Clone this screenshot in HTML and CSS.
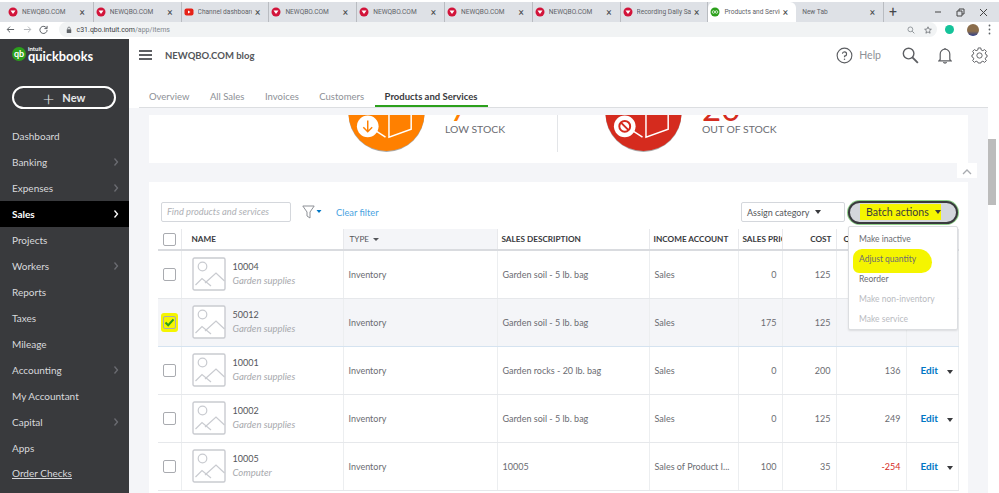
FILE: index.html
```html
<!DOCTYPE html>
<html lang="en">
<head>
  <meta charset="UTF-8" />
  <title>Products and Services</title>
  <link rel="stylesheet" href="styles.css">
</head>
<body>
  <svg class="defs" width="0" height="0">
    <symbol id="thumb" viewBox="0 0 34 34">
      <rect x="1" y="1" width="32" height="32" rx="1.5" fill="#fff" stroke="#c9cbd0" stroke-width="1.4"/>
      <circle cx="10.500" cy="9.500" r="4.300" fill="none" stroke="#c9cbd0" stroke-width="1.200"/>
      <path d="M3.500 28 L10 21.500 L19 29 M13 26 L24 16 L32.500 24" fill="none" stroke="#c9cbd0" stroke-width="1.200"/>
    </symbol>
    <symbol id="fav" viewBox="0 0 10 10">
      <circle cx="5" cy="5" r="4.500" fill="#d2143a"/>
      <path d="M2.500 3.500 H7.500 L5 7 Z" fill="#fff"/>
    </symbol>
    <symbol id="chev" viewBox="0 0 6 10">
      <path d="M1.500 1.500 L4.500 5 L1.500 8.500" fill="none" stroke="currentColor" stroke-width="1.300"/>
    </symbol>
    <symbol id="box" viewBox="0 0 78 78">
      <path d="M41.500 12 V63 L64 55 V12 M54 12 V33 L49 35 M59 12 V20" fill="none" stroke="#fff" stroke-width="1.500"/>
      <path d="M29 57 L38 63" stroke="#fff" stroke-width="1.500"/>
      <circle cx="20" cy="52" r="11" fill="#fff"/>
    </symbol>
  </svg>

  <div class="tabstrip">
    <div class="tab"><svg class="fav"><use href="#fav"/></svg><span class="tab-title">NEWQBO.COM</span><span class="tab-x">×</span></div>
    <div class="tab"><svg class="fav"><use href="#fav"/></svg><span class="tab-title">NEWQBO.COM</span><span class="tab-x">×</span></div>
    <div class="tab">
      <svg class="fav" viewBox="0 0 10 10"><rect x="0.500" y="1.500" width="9" height="7" rx="2" fill="#e62117"/><path d="M4 3.500 L6.500 5 L4 6.500 Z" fill="#fff"/></svg>
      <span class="tab-title">Channel dashboard</span><span class="tab-x">×</span>
    </div>
    <div class="tab"><svg class="fav"><use href="#fav"/></svg><span class="tab-title">NEWQBO.COM</span><span class="tab-x">×</span></div>
    <div class="tab"><svg class="fav"><use href="#fav"/></svg><span class="tab-title">NEWQBO.COM</span><span class="tab-x">×</span></div>
    <div class="tab"><svg class="fav"><use href="#fav"/></svg><span class="tab-title">NEWQBO.COM</span><span class="tab-x">×</span></div>
    <div class="tab"><svg class="fav"><use href="#fav"/></svg><span class="tab-title">NEWQBO.COM</span><span class="tab-x">×</span></div>
    <div class="tab"><svg class="fav"><use href="#fav"/></svg><span class="tab-title">Recording Daily Sal</span><span class="tab-x">×</span></div>
    <div class="tab tab-active">
      <svg class="fav" viewBox="0 0 10 10"><circle cx="5" cy="5" r="4.500" fill="#2ca01c"/><circle cx="3.500" cy="5" r="1.300" fill="none" stroke="#fff" stroke-width="0.700"/><circle cx="6.500" cy="5" r="1.300" fill="none" stroke="#fff" stroke-width="0.700"/></svg>
      <span class="tab-title">Products and Servic</span><span class="tab-x">×</span>
    </div>
    <div class="tab tab-new"><span class="tab-title">New Tab</span><span class="tab-x">×</span></div>
    <span class="tab-plus">+</span>
    <div class="win-controls">
      <svg width="8" height="8" viewBox="0 0 8 8"><path d="M1 4 H7" stroke="#444" stroke-width="1"/></svg>
      <svg width="9" height="9" viewBox="0 0 9 9"><path d="M1 3 H6 V8 H1 Z M3 3 V1 H8 V6 H6" fill="none" stroke="#444" stroke-width="1"/></svg>
      <svg width="9" height="9" viewBox="0 0 9 9"><path d="M1 1 L8 8 M8 1 L1 8" stroke="#444" stroke-width="1"/></svg>
    </div>
  </div>

  <div class="toolbar">
    <svg class="tool-icon" viewBox="0 0 10 10"><path d="M9 5 H1.500 M4.500 1.800 L1.300 5 L4.500 8.200" fill="none" stroke="#5f6368" stroke-width="1.100"/></svg>
    <svg class="tool-icon" viewBox="0 0 10 10"><path d="M1 5 H8.500 M5.500 1.800 L8.700 5 L5.500 8.200" fill="none" stroke="#b4b7bb" stroke-width="1.100"/></svg>
    <svg class="tool-icon" viewBox="0 0 10 10"><path d="M8.500 3.500 A4 4 0 1 0 9 5.500 M9 1 V4 H6" fill="none" stroke="#5f6368" stroke-width="1.100"/></svg>
    <div class="urlbar">
      <svg class="lock" viewBox="0 0 8 10"><rect x="1" y="4" width="6" height="5" rx="0.800" fill="#5f6368"/><path d="M2.300 4 V2.800 A1.700 1.700 0 0 1 5.700 2.800 V4" fill="none" stroke="#5f6368"/></svg>
      <span class="url">c31.qbo.intuit.com<span class="url-path">/app/items</span></span>
      <svg class="url-icon" viewBox="0 0 10 10"><circle cx="4.200" cy="4.200" r="3" fill="none" stroke="#80868b"/><path d="M6.500 6.500 L9.200 9.200" stroke="#80868b" stroke-width="1.100"/></svg>
      <svg class="url-icon" viewBox="0 0 10 10"><path d="M5 1 L6.200 3.800 L9.200 4.100 L6.900 6 L7.600 9 L5 7.400 L2.400 9 L3.100 6 L0.800 4.100 L3.800 3.800 Z" fill="none" stroke="#5f6368" stroke-width="0.900"/></svg>
    </div>
    <span class="grammarly"></span>
    <span class="avatar"></span>
    <svg class="dots" viewBox="0 0 3 11"><circle cx="1.500" cy="1.500" r="0.900" fill="#5f6368"/><circle cx="1.500" cy="5.500" r="0.900" fill="#5f6368"/><circle cx="1.500" cy="9.500" r="0.900" fill="#5f6368"/></svg>
  </div>

  <div class="app">
    <aside class="sidebar">
      <div class="logo">
        <span class="logo-mark">qb</span>
        <span class="logo-text"><small>intuit</small>quickbooks</span>
      </div>
      <div class="new-btn"><span class="new-plus">+</span>New</div>
      <ul class="side-nav">
        <li>Dashboard</li>
        <li>Banking<svg class="chev"><use href="#chev"/></svg></li>
        <li>Expenses<svg class="chev"><use href="#chev"/></svg></li>
        <li class="side-active">Sales<svg class="chev"><use href="#chev"/></svg></li>
        <li>Projects</li>
        <li>Workers<svg class="chev"><use href="#chev"/></svg></li>
        <li>Reports</li>
        <li>Taxes</li>
        <li>Mileage</li>
        <li>Accounting<svg class="chev"><use href="#chev"/></svg></li>
        <li>My Accountant</li>
        <li>Capital<svg class="chev"><use href="#chev"/></svg></li>
        <li>Apps</li>
        <li class="side-link">Order Checks</li>
      </ul>
    </aside>

    <div class="main">
      <header class="topbar">
        <div class="burger"><i></i><i></i><i></i></div>
        <span class="company">NEWQBO.COM blog</span>
        <div class="top-actions">
          <svg class="help-icon" viewBox="0 0 18 18"><circle cx="9" cy="9" r="7.800" fill="none" stroke="#5d5f63" stroke-width="1.200"/><path d="M6.800 7.200 A2.200 2.200 0 1 1 9 9.500 V10.800" fill="none" stroke="#5d5f63" stroke-width="1.200"/><circle cx="9" cy="13" r="0.800" fill="#5d5f63"/></svg>
          <span class="help-text">Help</span>
          <svg class="search-icon" viewBox="0 0 18 18"><circle cx="7" cy="7" r="5.600" fill="none" stroke="#5d5f63" stroke-width="1.500"/><path d="M11 11 L16.800 16.800" stroke="#5d5f63" stroke-width="2"/></svg>
          <svg class="bell-icon" viewBox="0 0 14 17"><path d="M2.200 12.500 V7 A4.800 4.800 0 0 1 11.800 7 V12.500 L13 13.800 H1 Z" fill="none" stroke="#5d5f63" stroke-width="1.200"/><path d="M5.500 15 A1.600 1.600 0 0 0 8.500 15 M7 2.200 V1" fill="none" stroke="#5d5f63" stroke-width="1.200"/></svg>
          <svg class="gear-icon" viewBox="0 0 18 18"><circle cx="9" cy="9" r="2.800" fill="none" stroke="#5d5f63"/><path d="M7.600 1 H10.400 L10.800 3.200 L12.600 3.900 L14.400 2.700 L16.300 4.600 L15 6.400 L15.800 8.100 L17 8.500 V10.500 L15.800 11 L15 12.600 L16.300 14.400 L14.400 16.300 L12.600 15 L10.800 15.800 L10.400 17 H7.600 L7.200 15.800 L5.400 15 L3.600 16.300 L1.700 14.400 L3 12.600 L2.200 11 L1 10.500 V8.500 L2.200 8.100 L3 6.400 L1.700 4.600 L3.600 2.700 L5.400 3.900 L7.200 3.200 Z" fill="none" stroke="#5d5f63"/></svg>
        </div>
      </header>

      <nav class="subnav">
        <a>Overview</a>
        <a>All Sales</a>
        <a>Invoices</a>
        <a>Customers</a>
        <a class="subnav-active">Products and Services</a>
      </nav>

      <div class="content">
        <div class="page">
          <section class="stats">
            <div class="stat stat-low">
              <svg class="stat-icon" viewBox="0 0 78 78">
                <circle cx="39" cy="39.500" r="38.500" fill="#a9a9a9"/>
                <circle cx="39" cy="38.500" r="38.500" fill="#ff8000"/>
                <use href="#box"/>
                <path d="M20 46 V57 M15.500 53 L20 57.500 L24.500 53" fill="none" stroke="#ff8000" stroke-width="1.500"/>
              </svg>
              <div class="stat-text"><b class="stat-num num-low">7</b><span class="stat-label">LOW STOCK</span></div>
            </div>
            <div class="stat stat-out">
              <svg class="stat-icon" viewBox="0 0 78 78">
                <circle cx="39" cy="39.500" r="38.500" fill="#a9a9a9"/>
                <circle cx="39" cy="38.500" r="38.500" fill="#d52b1e"/>
                <use href="#box"/>
                <circle cx="20" cy="52" r="5.500" fill="none" stroke="#d52b1e" stroke-width="2"/>
                <path d="M16.200 48.200 L23.800 55.800" stroke="#d52b1e" stroke-width="2"/>
              </svg>
              <div class="stat-text"><b class="stat-num num-out">20</b><span class="stat-label">OUT OF STOCK</span></div>
            </div>
          </section>

          <button class="scroll-up"><svg width="10" height="6" viewBox="0 0 10 6"><path d="M1 5 L5 1 L9 5" fill="none" stroke="#a8abb0" stroke-width="1.300"/></svg></button>

          <section class="list-card">
            <div class="list-tools">
              <div class="find">Find products and services</div>
              <svg class="funnel" viewBox="0 0 20 14"><path d="M0.800 1 H12.200 L8 7 V13 L5 11 V7 Z" fill="none" stroke="#8d9096"/><path d="M14.500 5 H19.500 L17 8 Z" fill="#0077c5"/></svg>
              <a class="clear">Clear filter</a>
              <div class="tools-right">
                <div class="assign">Assign category<i class="caret"></i></div>
                <div class="batch">
                  <div class="batch-btn"><span class="batch-label">Batch actions<i class="caret"></i></span></div>
                  <ul class="batch-menu">
                    <li>Make inactive</li>
                    <li><span class="marker">Adjust quantity</span></li>
                    <li>Reorder</li>
                    <li class="disabled">Make non-inventory</li>
                    <li class="disabled">Make service</li>
                  </ul>
                </div>
              </div>
            </div>

            <table class="items">
              <colgroup>
                <col class="c-check"><col class="c-name"><col class="c-type"><col class="c-desc"><col class="c-inc">
                <col class="c-price"><col class="c-cost"><col class="c-qty"><col class="c-act">
              </colgroup>
              <thead>
                <tr>
                  <th><span class="check"></span></th>
                  <th>NAME</th>
                  <th class="th-sorted">TYPE<i class="sort-caret"></i></th>
                  <th>SALES DESCRIPTION</th>
                  <th>INCOME ACCOUNT</th>
                  <th class="clip">SALES PRICE</th>
                  <th class="num">COST</th>
                  <th class="th-qty">Q</th>
                  <th></th>
                </tr>
              </thead>
              <tbody>
                <tr>
                  <td><span class="check"></span></td>
                  <td><div class="name-cell"><svg class="thumb"><use href="#thumb"/></svg><div><div class="sku">10004</div><div class="cat">Garden supplies</div></div></div></td>
                  <td>Inventory</td><td>Garden soil - 5 lb. bag</td><td>Sales</td>
                  <td class="num">0</td><td class="num">125</td><td class="num"></td><td></td>
                </tr>
                <tr class="selected">
                  <td><span class="check-mark"><span class="check"><svg width="11" height="9" viewBox="0 0 11 9"><path d="M1.500 4.500 L4.200 7.200 L9.500 1.300" fill="none" stroke="#2ca01c" stroke-width="2"/></svg></span></span></td>
                  <td><div class="name-cell"><svg class="thumb"><use href="#thumb"/></svg><div><div class="sku">50012</div><div class="cat">Garden supplies</div></div></div></td>
                  <td>Inventory</td><td>Garden soil - 5 lb. bag</td><td>Sales</td>
                  <td class="num">175</td><td class="num">125</td><td class="num"></td><td></td>
                </tr>
                <tr>
                  <td><span class="check"></span></td>
                  <td><div class="name-cell"><svg class="thumb"><use href="#thumb"/></svg><div><div class="sku">10001</div><div class="cat">Garden supplies</div></div></div></td>
                  <td>Inventory</td><td>Garden rocks - 20 lb. bag</td><td>Sales</td>
                  <td class="num">0</td><td class="num">200</td><td class="num">136</td>
                  <td class="act"><a>Edit</a><i class="caret"></i></td>
                </tr>
                <tr>
                  <td><span class="check"></span></td>
                  <td><div class="name-cell"><svg class="thumb"><use href="#thumb"/></svg><div><div class="sku">10002</div><div class="cat">Garden supplies</div></div></div></td>
                  <td>Inventory</td><td>Garden soil - 5 lb. bag</td><td>Sales</td>
                  <td class="num">0</td><td class="num">125</td><td class="num">249</td>
                  <td class="act"><a>Edit</a><i class="caret"></i></td>
                </tr>
                <tr>
                  <td><span class="check"></span></td>
                  <td><div class="name-cell"><svg class="thumb"><use href="#thumb"/></svg><div><div class="sku">10005</div><div class="cat">Computer</div></div></div></td>
                  <td>Inventory</td><td>10005</td><td>Sales of Product I...</td>
                  <td class="num">100</td><td class="num">35</td><td class="num neg">-254</td>
                  <td class="act"><a>Edit</a><i class="caret"></i></td>
                </tr>
              </tbody>
            </table>
          </section>
        </div>
        <div class="scrollbar"><div class="thumb-bar"></div></div>
      </div>
    </div>
  </div>
</body>
</html>
```

FILE: styles.css
```css
* {
  box-sizing: border-box;
}

html, body {
  margin: 0;
  height: 493px;
  overflow: hidden;
}

body {
  display: flex;
  flex-direction: column;
  font-family: Lato, "Open Sans", sans-serif;
  background-color: #fff;
  color: #393a3d;
}

ul {
  list-style: none;
  margin: 0;
  padding: 0;
}

.defs {
  position: absolute;
}

/* browser tabs */
.tabstrip {
  display: flex;
  align-items: center;
  height: 20px;
  margin-top: 2px;
  padding-left: 6px;
  background-color: #dee1e6;
  font-family: Roboto, sans-serif;
  font-size: 6.600px;
  color: #5f6368;
  flex-shrink: 0;
}

.tab {
  display: flex;
  align-items: center;
  gap: 3px;
  width: 87.800px;
  height: 20px;
  padding: 0 5px 0 1px;
  border-right: 1px solid #b9bcc1;
}

.fav {
  width: 10px;
  height: 10px;
  margin-left: 1px;
  flex-shrink: 0;
}

.tab-title {
  flex: 1;
  margin-left: 1px;
  white-space: nowrap;
  overflow: hidden;
}

.tab-x {
  font-size: 10px;
  color: #45474a;
  margin-right: 3px;
}

.tab-active {
  background-color: #fff;
  border-radius: 6px 6px 0 0;
  border-right: none;
}

.tab-new {
  padding-left: 5px;
}

.tab-plus {
  margin-left: 5px;
  font-size: 14px;
  color: #45474a;
}

.win-controls {
  display: flex;
  align-items: center;
  gap: 14px;
  margin-left: auto;
  padding-right: 11px;
}

/* browser toolbar */
.toolbar {
  display: flex;
  align-items: center;
  height: 15px;
  padding-left: 6px;
  flex-shrink: 0;
  background-color: #fff;
}

.tool-icon {
  width: 9px;
  height: 9px;
  margin-right: 7.500px;
}

.urlbar {
  display: flex;
  align-items: center;
  width: 878px;
  height: 15px;
  margin-left: 3px;
  padding: 0 5px 0 7px;
  background-color: #f1f3f4;
  border-radius: 8px;
  font-family: Roboto, sans-serif;
  font-size: 7px;
  color: #3c4043;
}

.lock {
  width: 6px;
  height: 8px;
  margin-right: 5px;
}

.url {
  flex: 1;
}

.url-path {
  color: #80868b;
}

.url-icon {
  width: 8px;
  height: 8px;
  margin-left: 9px;
}

.grammarly {
  width: 9px;
  height: 9px;
  margin-left: 8px;
  border-radius: 50%;
  background-color: #15c39a;
}

.avatar {
  width: 12px;
  height: 12px;
  margin-left: 13px;
  border-radius: 50%;
  background: linear-gradient(#8a6d4b 60%, #2b3d8c);
}

.dots {
  width: 3px;
  height: 11px;
  margin-left: 9px;
}

/* quickbooks shell */
.app {
  display: flex;
  flex: 1;
  min-height: 0;
  margin-top: 2px;
}

.sidebar {
  width: 129px;
  flex-shrink: 0;
  background-color: #393a3d;
  color: #d8d9dc;
  font-size: 10px;
}

.logo {
  display: flex;
  align-items: center;
  gap: 2px;
  height: 30px;
  padding: 0 0 0 12px;
  color: #fff;
}

.logo-mark {
  width: 14px;
  height: 14px;
  border-radius: 50%;
  background-color: #2ca01c;
  font-size: 9px;
  font-weight: 700;
  line-height: 13px;
  text-align: center;
}

.logo-text {
  font-size: 12.800px;
  font-weight: 700;
  line-height: 11px;
}

.logo-text small {
  display: block;
  font-size: 6px;
  line-height: 5px;
  font-weight: 700;
}

.new-btn {
  display: flex;
  align-items: center;
  justify-content: center;
  height: 23px;
  margin: 17px 13px 0 12px;
  border: 2px solid #fff;
  border-radius: 12px;
  font-size: 11px;
  font-weight: 700;
  color: #e6e7e9;
}

.new-plus {
  margin-right: 8px;
  font-size: 20px;
  font-weight: 300;
  line-height: 18px;
}

.side-nav {
  margin-top: 14px;
}

.side-nav li {
  display: flex;
  align-items: center;
  justify-content: space-between;
  height: 26px;
  padding: 0 10px 0 12px;
}

.chev {
  width: 6px;
  height: 10px;
  color: #6b6c72;
}

.side-nav .side-active {
  background-color: #000;
  color: #fff;
  font-weight: 700;
}

.side-active .chev {
  color: #fff;
}

.side-nav .side-link {
  text-decoration: underline;
  height: 24px;
}

.main {
  display: flex;
  flex-direction: column;
  flex: 1;
  min-width: 0;
}

.topbar {
  display: flex;
  align-items: center;
  height: 32px;
  padding-left: 10px;
  flex-shrink: 0;
}

.burger {
  display: flex;
  flex-direction: column;
  gap: 2.500px;
  width: 13px;
}

.burger i {
  height: 1.500px;
  background-color: #5d5f63;
}

.company {
  margin-left: 13px;
  font-size: 9.500px;
  font-weight: 700;
  color: #54565a;
}

.top-actions {
  display: flex;
  align-items: center;
  margin-left: auto;
  padding-right: 11px;
}

.help-icon {
  width: 17px;
  height: 17px;
}

.help-text {
  margin: 0 21px 0 6px;
  font-size: 10.500px;
  color: #8d9096;
}

.search-icon {
  width: 17px;
  height: 17px;
}

.bell-icon {
  width: 14px;
  height: 17px;
  margin-left: 19px;
}

.gear-icon {
  width: 17px;
  height: 17px;
  margin-left: 19px;
}

.subnav {
  display: flex;
  gap: 20.500px;
  height: 37px;
  margin: 0 11px 0 10px;
  padding: 20px 0 0 10px;
  border-bottom: 1px solid #dcdee1;
  font-size: 9.500px;
  color: #8d9096;
  flex-shrink: 0;
}

.subnav-active {
  font-weight: 700;
  color: #393a3d;
}

.subnav-active::after {
  content: "";
  display: block;
  height: 2px;
  margin: 3px -10px 0;
  background-color: #2ca01c;
}

.content {
  display: flex;
  flex: 1;
  min-height: 0;
}

.page {
  position: relative;
  flex: 1;
  padding: 7px 20px 0;
  background-color: #f4f5f8;
  overflow: hidden;
}

.scrollbar {
  width: 11px;
  background-color: #fff;
}

.thumb-bar {
  width: 8px;
  height: 66px;
  margin-top: 31px;
  background-color: #bcbcbc;
}

/* stock summary */
.stats {
  display: flex;
  align-items: flex-end;
  height: 48px;
  padding-bottom: 11px;
  background-color: #fff;
  overflow: hidden;
}

.stat {
  display: flex;
  align-items: flex-end;
  gap: 20px;
}

.stat-low {
  width: 409px;
  padding-left: 199px;
  border-right: 1px solid #e3e5e8;
}

.stat-out {
  padding-left: 47px;
}

.stat-icon {
  width: 77px;
  height: 77px;
  flex-shrink: 0;
}

.stat-text {
  display: flex;
  flex-direction: column;
  padding-bottom: 15px;
}

.stat-num {
  font-size: 33px;
  font-weight: 400;
  line-height: 28px;
}

.num-low {
  padding-left: 5px;
  color: #ff8000;
}

.num-out {
  color: #d52b1e;
}

.stat-label {
  font-size: 10.400px;
  line-height: 15px;
  color: #6b6c72;
}

.scroll-up {
  position: absolute;
  top: 55px;
  right: 11px;
  width: 20px;
  height: 15px;
  padding: 0;
  border: none;
  background-color: #fff;
}

/* products table */
.list-card {
  height: 320px;
  margin-top: 19px;
  padding: 20px 10px 0 9px;
  background-color: #fff;
}

.list-tools {
  display: flex;
  align-items: center;
  height: 20px;
  margin-bottom: 7px;
  padding-left: 3px;
}

.find {
  width: 130px;
  height: 20px;
  padding-left: 5px;
  border: 1px solid #d4d7dc;
  border-radius: 2px;
  font-size: 9.300px;
  font-style: italic;
  line-height: 18px;
  color: #aeb0b5;
}

.funnel {
  width: 20px;
  height: 14px;
  margin-left: 11px;
}

.clear {
  margin-left: 14px;
  font-size: 9.300px;
  color: #4aa3df;
}

.tools-right {
  display: flex;
  align-items: center;
  gap: 3px;
  margin-left: auto;
}

.caret {
  display: inline-block;
  width: 0;
  height: 0;
  border-left: 3.500px solid transparent;
  border-right: 3.500px solid transparent;
  border-top: 4px solid #393a3d;
}

.assign {
  display: flex;
  align-items: center;
  gap: 6px;
  width: 104px;
  height: 20px;
  padding-left: 5px;
  border: 1px solid #d4d7dc;
  border-radius: 2px;
  font-size: 9px;
  color: #54565a;
}

.batch {
  position: relative;
  width: 110px;
}

.batch-btn {
  display: flex;
  align-items: center;
  height: 23px;
  padding-left: 10px;
  border: 2px solid #393a3d;
  border-radius: 12px;
  background-color: #d4d7dc;
  box-shadow: 0 0 0 1px #8fcf8a;
}

.batch-label {
  display: flex;
  align-items: center;
  gap: 6px;
  padding: 2px 0 2px 6px;
  background-color: #f5f500;
  font-size: 10.600px;
  color: #393a3d;
}

.batch-menu {
  position: absolute;
  top: 25px;
  left: 0;
  z-index: 2;
  width: 110px;
  height: 104px;
  padding-top: 2px;
  border: 1px solid #dcdee1;
  border-radius: 2px;
  background-color: #fff;
  box-shadow: 0 1px 2px rgba(0, 0, 0, 0.1);
  font-size: 8.500px;
  color: #6b6c72;
}

.batch-menu li {
  height: 20.200px;
  padding-left: 10px;
  line-height: 20px;
}

.batch-menu .disabled {
  color: #b9bbbf;
}

.marker {
  display: inline-block;
  margin: -1px -16px 0 -6px;
  padding: 0 16px 4px 6px;
  line-height: 20px;
  background-color: #f5f500;
  border-radius: 12px 18px 14px 8px;
}

.items {
  width: 800px;
  table-layout: fixed;
  border-collapse: collapse;
  font-size: 9px;
  color: #6b6c72;
}

.c-check { width: 23px; }
.c-name { width: 162px; }
.c-type { width: 154px; }
.c-desc { width: 152px; }
.c-inc { width: 89px; }
.c-price { width: 44px; }
.c-cost { width: 54px; }
.c-qty { width: 70px; }
.c-act { width: 52px; }

.items th {
  height: 21px;
  padding: 0 4px;
  border-bottom: 2px solid #d9dbdf;
  border-right: 1px solid #e8e9ec;
  font-size: 8.200px;
  font-weight: 700;
  text-align: left;
  color: #393a3d;
}

.items th:first-child, .items td:first-child {
  padding: 0 0 0 5px;
}

.items th:nth-child(2), .items td:nth-child(2) {
  padding-left: 10px;
}

.items .th-sorted {
  padding-left: 6px;
  background-color: #f4f5f8;
  color: #54565a;
  font-weight: 400;
}

.items .clip {
  overflow: hidden;
  white-space: nowrap;
}

.items .th-qty {
  padding-left: 7px;
}

.sort-caret {
  display: inline-block;
  margin-left: 4px;
  vertical-align: 1px;
  border-left: 3px solid transparent;
  border-right: 3px solid transparent;
  border-top: 3px solid #54565a;
}

.items td {
  height: 48px;
  padding: 0 5px;
  border-bottom: 1px solid #e6e8eb;
  border-right: 1px solid #eceef0;
  white-space: nowrap;
  overflow: hidden;
}

.items th.num {
  text-align: right;
}

.items .num {
  text-align: right;
}

.items .neg {
  color: #d52b1e;
}

.selected td {
  background-color: #f4f5f8;
  border-bottom-color: #d5e3f0;
}

.check {
  display: flex;
  align-items: center;
  justify-content: center;
  width: 13px;
  height: 13px;
  border: 1px solid #a9abb0;
  border-radius: 2px;
  background-color: #fff;
}

.check-mark {
  display: inline-flex;
  margin: 0 0 0 -2px;
  padding: 3px 2px;
  background-color: #f5f500;
  border-radius: 3px;
}

.selected .check {
  background-color: transparent;
}

.name-cell {
  display: flex;
  align-items: center;
  gap: 7px;
}

.thumb {
  width: 34px;
  height: 34px;
}

.sku {
  font-size: 9px;
  line-height: 14px;
  color: #54565a;
}

.cat {
  font-size: 9.500px;
  font-style: italic;
  line-height: 14px;
  color: #a7a9ad;
}

.items .act {
  padding-left: 14px;
}

.act a {
  margin-right: 9px;
  font-size: 10px;
  font-weight: 700;
  color: #0077c5;
}
```
